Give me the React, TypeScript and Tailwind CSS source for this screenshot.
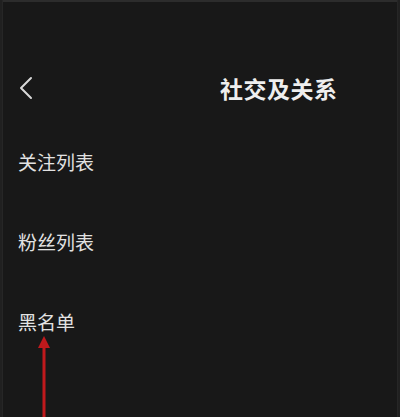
const items = ['关注列表', '粉丝列表', '黑名单']

export default function App() {
  return (
    <div
      className="relative h-[417px] w-[400px] overflow-hidden bg-[#181818] text-[#e6e6e6]"
      style={{ fontFamily: '"Noto Sans CJK SC", "Noto Sans", sans-serif' }}
    >
      {/* frame edges */}
      <div className="absolute inset-x-0 top-0 h-[2px] bg-[#2c2c2c]" />
      <div className="absolute inset-y-0 left-0 w-[3px] border-r border-[#262626] bg-[#202020]" />
      <div className="absolute inset-y-0 right-0 w-[3px] border-l border-[#262626] bg-[#202020]" />

      {/* Header */}
      <div className="mt-[71px] flex h-[34px] items-center pl-[18px]">
        <svg width="16" height="24" viewBox="0 0 16 24" className="shrink-0">
          <path d="M13 2 L3 12 L13 22" fill="none" stroke="#d8d8d8" strokeWidth="2" strokeLinecap="round" strokeLinejoin="round" />
        </svg>
        <h1 className="ml-[186px] text-[23px] font-bold leading-[34px] tracking-[0.5px] text-[#eeeeee]">社交及关系</h1>
      </div>

      {/* List */}
      <div className="mt-[45px] flex flex-col gap-[56px] pl-[18px]">
        {items.map((t) => (
          <div key={t} className="h-[24px] text-[19px] leading-[24px] text-[#e2e2e2]">
            {t}
          </div>
        ))}
      </div>

      {/* Red annotation arrow */}
      <svg className="absolute left-[34px] top-[334px]" width="20" height="83" viewBox="0 0 20 83">
        <path d="M10 6 L10 83" stroke="#c0191c" strokeWidth="3" />
        <path d="M10 2 L4 14 L16 14 Z" fill="#c0191c" />
      </svg>
    </div>
  )
}
